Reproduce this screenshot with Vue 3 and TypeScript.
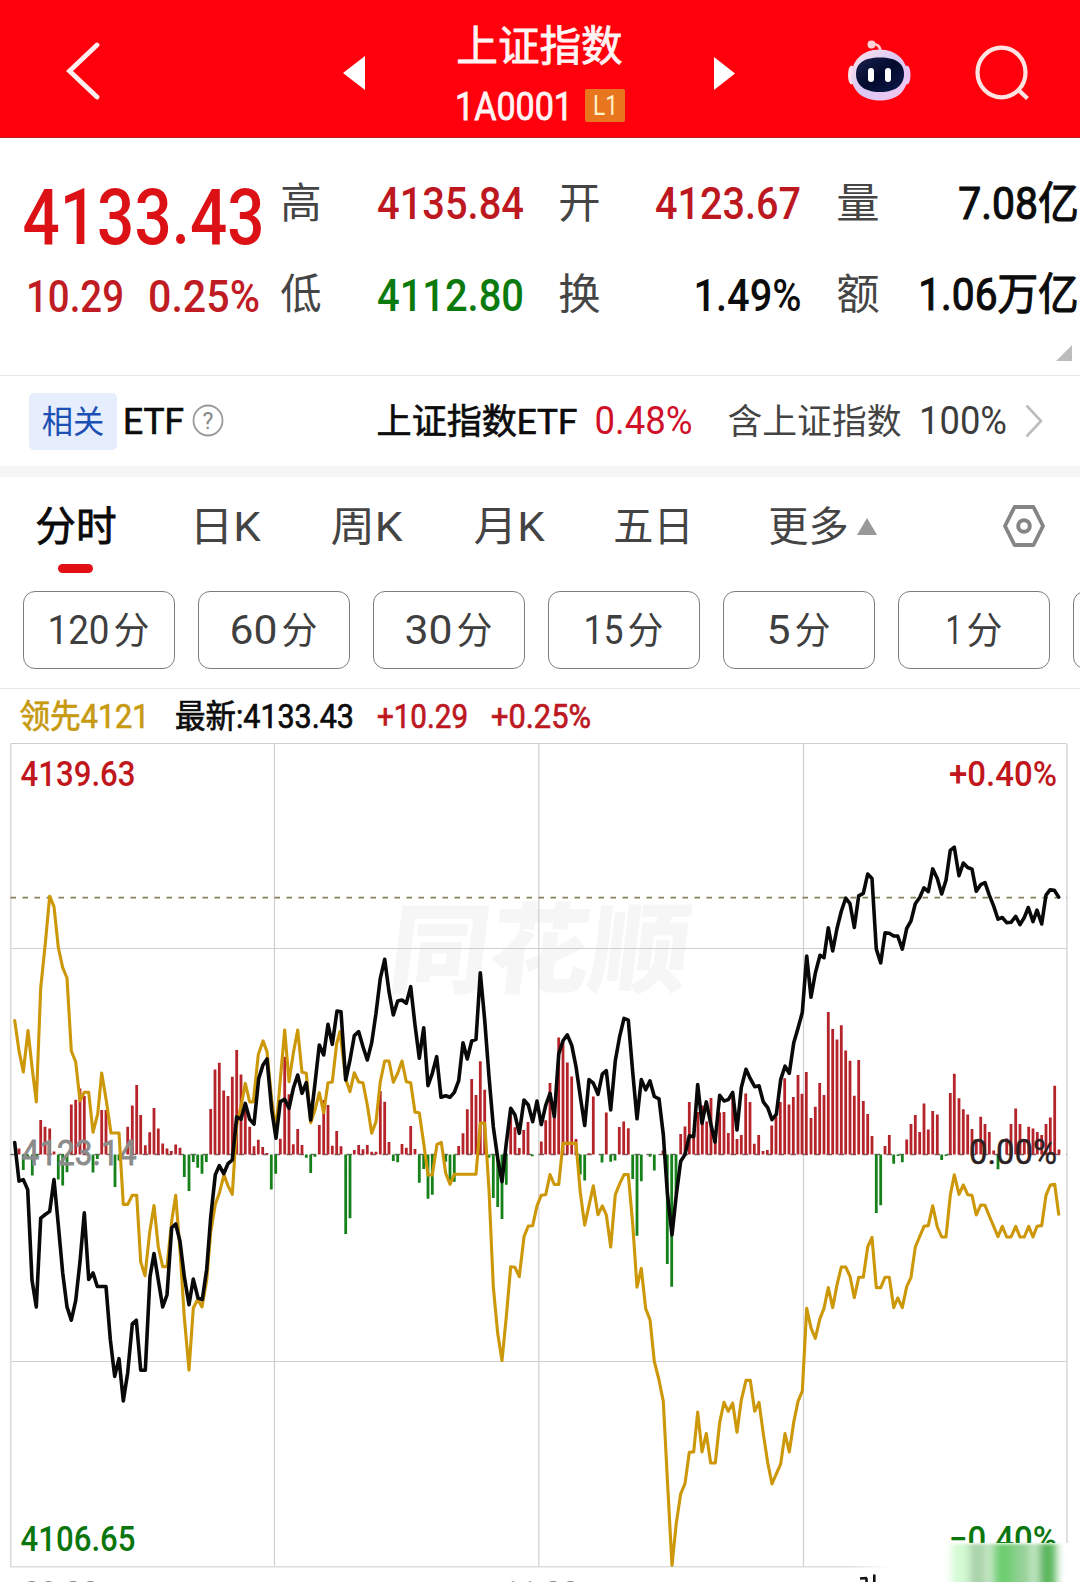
<script setup lang="ts">
import { h } from 'vue'

interface FitProps {
  t: string
  w: number
  s: number
  pad?: number
}

// A single line of text set to an exact width; s is the font size.
const Fit = (p: FitProps) => {
  const pad = p.pad ?? p.s * 0.04
  return h('svg', { class: 'fit', width: p.w, height: p.s, 'aria-label': p.t }, [
    h(
      'text',
      {
        x: -pad,
        y: p.s * 0.86,
        'font-size': p.s,
        textLength: p.w + pad * 2,
        lengthAdjust: 'spacingAndGlyphs',
        fill: 'currentColor',
      },
      p.t,
    ),
  ])
}
Fit.props = ['t', 'w', 's', 'pad']

const tabs = [
  { t: '分时', w: 78, x: 37, active: true },
  { t: '日K', w: 68, x: 191 },
  { t: '周K', w: 69, x: 332 },
  { t: '月K', w: 68, x: 475 },
  { t: '五日', w: 77, x: 615 },
  { t: '更多', w: 77, x: 770 },
].map((tab, i, all) => ({
  ...tab,
  gap: i === 0 ? tab.x : tab.x - all[i - 1].x - all[i - 1].w,
}))

const periods = [
  { n: '120', w: 57 },
  { n: '60', w: 43 },
  { n: '30', w: 43 },
  { n: '15', w: 35 },
  { n: '5', w: 19 },
  { n: '1', w: 12 },
]

// Each stretch of the session has its own origin and scale.
type Frame = [number, number, number]
const frames: Frame[] = [
  [0, 840, 2.703],
  [260, 880, 3],
  [530, 880, 2.24],
  [790, 820, 2.904],
]
type Pt = [number, number]
const parse = (parts: string[]): Pt[] =>
  parts.flatMap((part, i) => {
    const [x0, y0, sy] = frames[i]
    return part
      .trim()
      .split(/\s+/)
      .map((pair): Pt => {
        const [x, y] = pair.split(',').map(Number)
        return [+(x0 + x / 3).toFixed(1), +(y0 + y / sy).toFixed(1)]
      })
  })

const price = parse([
  '44,818 57,922 70,918 83,945 96,1190 109,1262 122,1022 135,1013 149,1004 162,918 175,1040 188,1170 201,1262 214,1298 227,1245 240,1140 253,1008 266,1188 279,1170 292,1207 318,1207 331,1350 344,1450 357,1402 370,1516 383,1440 397,1308 409,1298 422,1433 436,1433 450,1180 462,1118 475,1190 488,1262 501,1230 515,1048 527,1038 540,1085 553,1180 567,1256 580,1187 594,1238 607,1242 620,1160 632,1020 646,905 658,880 671,902 684,875 697,865 710,748 723,755 736,712 749,755 762,768 776,645 789,608 801,592',
  '35,690 48,775 61,665 74,658 87,685 100,625 113,585 126,640 139,608 152,720 165,610 178,495 191,525 204,433 217,493 231,393 243,395 257,600 270,540 283,467 296,455 309,500 322,540 335,488 348,400 361,295 374,238 387,335 400,405 413,363 426,360 439,370 452,320 465,435 478,535 491,443 504,617 517,580 530,530 543,652 557,647 570,652 583,637 596,602 609,488 622,537 635,483 648,478 661,278 674,420 687,590 700,740 713,835 726,905 739,790 752,685 765,705 778,760 792,660 805,675 818,725',
  '21,495 34,548 47,505 60,478 73,530 86,390 99,360 112,347 125,370 138,418 151,485 164,550 177,447 190,455 204,480 217,435 229,427 242,515 256,405 269,350 282,310 295,314 308,430 321,535 334,447 347,470 360,450 373,485 387,490 400,570 412,700 426,795 439,705 452,630 465,615 478,573 491,575 503,458 516,545 529,497 542,545 555,587 569,482 582,495 595,492 608,476 621,560 634,465 648,424 661,445 674,463 687,461 700,497 713,510 726,537 739,525 752,447 765,417 778,433 791,365 804,332 817,297',
  '50,395 63,515 76,445 90,393 102,400 115,313 128,380 141,315 154,265 167,227 180,243 193,312 206,220 220,213 233,157 246,170 259,375 272,415 285,328 298,329 311,337 323,337 337,375 350,315 363,293 376,243 389,225 402,197 415,208 428,142 442,170 455,215 468,175 481,88 493,79 507,162 520,125 533,138 546,143 559,207 572,188 585,182 598,218 611,250 624,288 637,283 650,298 663,297 677,280 690,304 703,283 715,254 729,295 741,262 755,302 768,218 780,203 793,204 806,224',
])

const lead = parse([
  '44,488 57,570 70,627 84,515 97,620 109,708 122,400 136,280 149,152 162,180 175,290 188,345 201,373 214,570 227,600 240,705 253,682 266,682 279,790 293,740 305,630 319,705 333,792 357,792 370,985 383,985 397,960 410,960 422,1140 435,1178 449,1060 462,988 475,1100 488,1153 501,1153 515,1030 527,960 541,1120 553,1290 567,1433 580,1265 593,1242 606,1262 620,1190 632,1060 646,985 658,955 672,905 684,935 697,958 710,770 723,720 736,658 749,708 760,708 775,580 789,543 801,572',
  '35,660 48,750 61,600 74,450 87,605 100,520 113,450 126,577 139,580 152,728 165,690 178,638 191,698 204,608 217,606 230,490 240,455 257,598 270,635 283,578 296,606 309,608 322,675 335,760 348,725 361,605 374,543 387,543 400,607 413,580 426,543 439,605 452,608 465,697 478,698 491,790 504,885 517,885 531,793 544,787 557,880 570,913 583,883 648,883 661,730 674,730 687,930 700,1220 713,1360 726,1442 739,1310 752,1160 765,1162 778,1190 792,1070 805,1038 818,1037',
  '21,730 34,706 47,705 60,660 73,682 86,682 99,590 138,590 151,700 164,773 190,685 204,750 217,730 229,750 242,822 256,705 269,680 282,660 295,660 308,770 321,912 334,870 347,960 360,985 373,1078 387,1120 400,1168 412,1340 426,1535 439,1440 452,1375 465,1352 478,1282 491,1281 503,1192 516,1281 529,1240 542,1306 556,1306 569,1215 582,1170 595,1190 608,1172 621,1237 634,1165 648,1121 661,1121 674,1190 687,1170 700,1240 713,1305 726,1353 739,1330 752,1308 765,1240 778,1281 791,1215 804,1168 817,1145',
  '50,1418 63,1475 76,1505 90,1447 102,1418 115,1358 128,1416 141,1350 154,1298 167,1298 180,1325 193,1387 206,1328 220,1328 233,1240 246,1212 259,1358 272,1358 285,1328 298,1328 311,1416 323,1388 337,1416 350,1355 363,1328 376,1240 402,1180 415,1178 428,1120 442,1182 455,1211 468,1211 481,1090 493,1030 507,1087 520,1060 533,1088 546,1090 559,1147 572,1118 585,1119 598,1150 624,1210 637,1180 650,1211 663,1211 677,1180 690,1211 703,1211 716,1180 729,1211 741,1180 755,1178 768,1090 781,1060 794,1058 806,1145',
])

const bars = parse([
  '57,834 70,892 83,858 97,907 110,858 122,757 135,775 149,780 162,842 175,918 188,934 201,898 214,715 227,702 240,672 253,692 279,899 292,862 305,730 318,730 345,938 357,866 383,775 397,718 410,662 422,743 436,825 449,790 462,724 475,780 488,820 501,834 514,841 527,823 540,832 553,911 567,949 580,870 593,886 606,902 619,870 632,727 645,620 658,602 671,677 684,692 697,640 710,568 723,634 736,715 749,775 762,828 775,810 788,830 801,846 814,945 827,902',
  '61,776 74,530 87,643 100,793 113,747 126,795 139,833 152,879 165,830 178,735 191,660 204,675 217,797 230,753 243,799 257,1062 270,1015 283,810 296,795 309,808 322,795 335,815 348,815 361,633 374,665 387,786 400,843 413,847 426,792 439,803 452,738 465,807 478,908 491,867 504,956 517,944 557,845 570,907 583,905 596,798 609,760 622,688 635,597 648,645 661,544 674,629 687,833 700,954 713,981 726,1017 739,914 752,705 765,742 778,804 791,750 804,726 817,829',
  '34,586 47,538 60,455 73,530 86,353 99,362 112,409 125,440 138,580 151,660 164,673 177,612 190,485 216,633 229,521 242,631 255,628 268,553 281,541 295,556 308,670 321,797 334,675 360,620 373,651 399,606 412,860 425,911 438,702 452,569 465,552 478,497 491,570 504,520 517,505 530,541 543,488 556,580 569,521 582,520 595,567 608,485 621,580 634,571 647,478 660,497 673,591 686,571 699,607 712,605 725,550 738,530 751,497 764,444 777,503 790,486 804,437 816,479 829,430',
  '63,865 76,833 89,764 102,799 115,558 128,607 141,637 154,596 167,669 180,699 193,801 206,697 220,816 233,854 246,918 259,1141 272,1119 285,947 298,915 311,998 324,976 337,994 350,928 363,883 376,857 389,906 402,823 415,899 428,845 442,855 455,987 468,976 481,793 493,737 507,808 520,840 533,855 546,897 559,930 572,862 585,883 598,906 611,960 624,1014 650,925 663,883 677,838 690,883 703,930 716,891 729,896 742,906 755,915 768,883 781,864 794,772 807,957',
])

const base = 1154.6
const barPath = (up: boolean) =>
  bars
    .filter(([, y]) => y < base === up)
    .map(([x, y]) => `M${x} ${base}V${y}`)
    .join('')
const upBars = barPath(true)
const downBars = barPath(false)
const toPoints = (pts: Pt[]) => pts.map((p) => p.join(',')).join(' ')
</script>

<template>
  <main class="page">
    <header class="top">
      <svg class="back" width="36" height="137" viewBox="64 0 36 137">
        <path d="M97 45 69.500 71 97 97" fill="none" stroke="#fff0f0" stroke-width="4.800" stroke-linecap="round" />
      </svg>
      <svg class="prev" width="23" height="137" viewBox="342 0 23 137"><path d="M343 73 365 56V90Z" fill="#fff" /></svg>
      <div class="title">
        <Fit class="name" t="上证指数" :w="163" :s="42" />
        <div class="code">
          <Fit class="sym" t="1A0001" :w="112" :s="38" :pad="3" />
          <span class="level"><Fit t="L1" :w="21" :s="27" :pad="2" /></span>
        </div>
      </div>
      <svg class="next" width="22" height="137" viewBox="713 0 22 137"><path d="M714 57 735 73.500 714 90Z" fill="#fff" /></svg>
      <svg class="robot" width="64" height="137" viewBox="847 0 64 137">
        <defs>
          <linearGradient id="shell" x1="0" y1="0" x2="1" y2="1">
            <stop offset="0" stop-color="#ffe3ea" />
            <stop offset=".5" stop-color="#d9c9f5" />
            <stop offset="1" stop-color="#f5c6ef" />
          </linearGradient>
          <linearGradient id="visor" x1="0" y1="0" x2="1" y2="1">
            <stop offset="0" stop-color="#1b2350" />
            <stop offset=".5" stop-color="#030a2c" />
            <stop offset="1" stop-color="#0d1b4c" />
          </linearGradient>
        </defs>
        <path d="M871 44.500c6-1 9 1 9.500 7" fill="none" stroke="#ffc9cd" stroke-width="2.600" />
        <circle cx="871.500" cy="44.500" r="4" fill="#ffd2d6" />
        <ellipse cx="851.500" cy="75" rx="3.500" ry="9.500" fill="#ffe0ea" />
        <ellipse cx="907" cy="75" rx="3.500" ry="9.500" fill="#e7c5f4" />
        <path d="M879.500 49.500C897 49.500 907.500 61 907.500 76S897 100.500 880 100.500 851.500 91 851.500 76 862 49.500 879.500 49.500Z" fill="url(#shell)" />
        <path d="M880 57.500C897 57.500 904 64 904 74S897 92 880 92 856 84 856 74 863 57.500 880 57.500Z" fill="url(#visor)" />
        <rect x="868" y="68" width="6" height="14" rx="3" fill="#fff" />
        <rect x="885" y="68" width="6" height="14" rx="3" fill="#fff" />
      </svg>
      <svg class="search" width="58" height="137" viewBox="973 0 58 137">
        <g fill="none" stroke="#ffe3e3" stroke-width="4.200">
          <ellipse cx="1001.500" cy="72.500" rx="24" ry="24.800" />
          <path d="M1018 89.500l9.500 9" />
        </g>
      </svg>
    </header>

    <section class="quote">
      <div class="last">
        <Fit class="big" t="4133.43" :w="239" :s="78" :pad="1.500" />
        <div class="delta">
          <Fit t="10.29" :w="94" :s="45" :pad="2" />
          <Fit t="0.25%" :w="108" :s="45" :pad="2" />
        </div>
      </div>
      <div class="stats">
        <Fit class="label" t="高" :w="38" :s="42" />
        <Fit class="val red" t="4135.84" :w="145" :s="45" :pad="1" />
        <Fit class="label" t="开" :w="39" :s="42" />
        <Fit class="val red" t="4123.67" :w="144" :s="45" :pad="1" />
        <Fit class="label" t="量" :w="40" :s="42" />
        <Fit class="val semi" t="7.08亿" :w="117" :s="44" />
        <Fit class="label" t="低" :w="38" :s="42" />
        <Fit class="val green" t="4112.80" :w="145" :s="45" :pad="1" />
        <Fit class="label" t="换" :w="39" :s="42" />
        <Fit class="val" t="1.49%" :w="105" :s="45" :pad="1.500" />
        <Fit class="label" t="额" :w="40" :s="42" />
        <Fit class="val semi" t="1.06万亿" :w="157" :s="44" />
      </div>
      <i class="corner"></i>
    </section>

    <section class="related">
      <span class="badge"><Fit t="相关" :w="60" :s="32" /></span>
      <Fit class="etf semi" t="ETF" :w="57" :s="36" :pad="2" />
      <svg class="help" width="32" height="34" viewBox="0 0 32 34">
        <ellipse cx="16" cy="16.500" rx="14.500" ry="15" fill="none" stroke="#999" stroke-width="1.800" />
        <text x="16" y="24.500" font-size="23" text-anchor="middle" fill="#888">?</text>
      </svg>
      <Fit class="fund semi" t="上证指数ETF" :w="198" :s="35" />
      <Fit class="pct" t="0.48%" :w="95" :s="38" :pad="1.500" />
      <Fit class="holds" t="含上证指数" :w="171" :s="35" />
      <Fit class="share" t="100%" :w="84" :s="38" :pad="2" />
      <svg class="go" width="18" height="34" viewBox="0 0 18 34"><path d="M1.500 1.500 16 17 1.500 32.500" fill="none" stroke="#bdbdbd" stroke-width="2.600" /></svg>
    </section>

    <nav class="tabs">
      <span v-for="tab in tabs" :key="tab.t" class="tab" :class="{ active: tab.active }" :style="{ marginLeft: tab.gap + 'px' }">
        <Fit :t="tab.t" :w="tab.w" :s="41" />
      </span>
      <svg class="caret" width="20" height="17" viewBox="0 0 20 17"><path d="M10 0 20 17H0Z" fill="#999" /></svg>
      <svg class="gear" width="44" height="44" viewBox="0 0 44 44">
        <g fill="none" stroke="#858585" stroke-width="4" stroke-linejoin="round">
          <path d="M12.500 3H31.500L41 22 31.500 41H12.500L3 22Z" stroke-width="3.800" />
          <circle cx="22" cy="22" r="5.800" />
        </g>
      </svg>
    </nav>

    <div class="periods">
      <button v-for="p in periods" :key="p.n" class="chip" type="button">
        <Fit class="num" :t="p.n" :w="p.w" :s="40" :pad="2.500" />
        <Fit t="分" :w="33" :s="37" />
      </button>
      <button class="chip" type="button" aria-label="more"></button>
    </div>

    <div class="info">
      <Fit class="gold" t="领先4121" :w="127" :s="33" :pad="1.500" />
      <Fit class="now" t="最新:4133.43" :w="177" :s="33" :pad="1" />
      <Fit class="red d1" t="+10.29" :w="89" :s="33" :pad="1" />
      <Fit class="red d2" t="+0.25%" :w="98" :s="33" :pad="1" />
    </div>

    <svg class="chart" width="1080" height="842" viewBox="0 740 1080 842">
      <defs>
        <clipPath id="cut"><rect x="930" y="1500" width="150" height="43" /></clipPath>
        <filter id="soft" x="-10%" y="-20%" width="120%" height="150%"><feGaussianBlur stdDeviation="4.500 1.500" /></filter>
        <linearGradient id="edge"><stop offset="0" stop-color="#dcdcdc" /><stop offset=".95" stop-color="#dcdcdc" /><stop offset="1" stop-color="#dcdcdc" stop-opacity="0" /></linearGradient>
      </defs>
      <text class="mark" transform="translate(386 985) skewX(-7)" x="0" y="0" font-size="98" textLength="300" lengthAdjust="spacingAndGlyphs">同花顺</text>
      <g fill="none" stroke="#cfcfcf" stroke-width="1.200">
        <path d="M10.700 743.500H1067M10.700 948.500H1067M10.700 1361.500H1067M274.500 743.500V1567M538.800 743.500V1567M803.500 743.500V1567" />
        <path d="M10.700 743.500V1567M1067 743.500V1543" stroke="#dedede" stroke-width="1.800" />
      </g>
      <rect x="10" y="1566" width="880" height="1.500" fill="url(#edge)" />
      <path d="M10.500 897.600H1067" stroke="#858158" stroke-width="1.800" stroke-dasharray="5.500 6.500" />
      <path d="M10.500 1154.600H1067" stroke="#77666a" stroke-width="1.500" stroke-dasharray="5.500 6.500" />
      <g fill="none" stroke-width="2.800">
        <path :d="upBars" stroke="#b5242a" />
        <path :d="downBars" stroke="#16801a" />
      </g>
      <text x="21.500" y="1164.500" font-size="35" textLength="115" lengthAdjust="spacingAndGlyphs" fill="#8b8b8b" stroke="#8b8b8b" stroke-width=".8">4123.14</text>
      <polyline :points="toPoints(lead)" fill="none" stroke="#cc9708" stroke-width="3.100" stroke-linejoin="round" stroke-linecap="round" />
      <polyline :points="toPoints(price)" fill="none" stroke="#090909" stroke-width="3.600" stroke-linejoin="round" stroke-linecap="round" />
      <text x="969" y="1164" font-size="35" textLength="88" lengthAdjust="spacingAndGlyphs" fill="#2b2022" stroke="#2b2022" stroke-width=".4">0.00%</text>
      <g font-size="35" class="bounds">
        <text x="20.500" y="785.500" textLength="115" lengthAdjust="spacingAndGlyphs" fill="#c0161c">4139.63</text>
        <text x="949" y="785.500" textLength="108" lengthAdjust="spacingAndGlyphs" fill="#c0161c">+0.40%</text>
        <text x="20.500" y="1551" textLength="115" lengthAdjust="spacingAndGlyphs" fill="#0a760c">4106.65</text>
        <text x="949" y="1551" textLength="108" lengthAdjust="spacingAndGlyphs" fill="#0a760c" clip-path="url(#cut)">−0.40%</text>
      </g>
      <g filter="url(#soft)">
        <rect x="952" y="1544" width="16" height="46" fill="#d3fbd3" />
        <rect x="969" y="1544" width="17" height="46" fill="#a8d3a9" />
        <rect x="986" y="1544" width="8" height="46" fill="#d3efd3" />
        <rect x="993" y="1544" width="23" height="46" fill="#6fce72" />
        <rect x="1014" y="1544" width="16" height="46" fill="#93d095" />
        <rect x="1030" y="1544" width="9" height="46" fill="#c9eac9" />
        <rect x="1039" y="1544" width="17" height="46" fill="#57b55a" />
      </g>
      <g font-size="34" fill="#8a8a8a">
        <text x="23" y="1604.500" textLength="76" lengthAdjust="spacingAndGlyphs">09:30</text>
        <text x="503" y="1604.500" textLength="76" lengthAdjust="spacingAndGlyphs">11:30</text>
      </g>
      <path d="M860 1578.500l7-.5M866.500 1578v4M874.300 1574.500V1582" stroke="#111" stroke-width="2.600" fill="none" />
    </svg>
  </main>
</template>

<style>
body {
  margin: 0;
  background: #fff;
  overflow: hidden;
}
</style>

<style scoped>
.page {
  width: 1080px;
  height: 1582px;
  overflow: hidden;
  background: #fff;
  font-family: Roboto, "Noto Sans CJK SC", sans-serif;
  color: #0c0c0c;
}
svg {
  display: block;
  flex: none;
}
.fit {
  overflow: visible;
}
.semi {
  stroke: currentColor;
  stroke-width: 0.7px;
}
.top {
  display: flex;
  height: 138px;
  box-sizing: border-box;
  background: #ff000c;
  border-bottom: 1px solid #c01a24;
  padding-left: 64px;
}
.prev { margin-left: 242px; }
.title {
  width: 167px;
  margin-left: 93px;
  color: #fff4f4;
  stroke: #fff4f4;
  stroke-width: 0.8px;
}
.name { margin-top: 25px; }
.code {
  display: flex;
  align-items: center;
  justify-content: space-between;
  height: 33px;
  margin-top: 22px;
}
.level {
  display: flex;
  align-items: center;
  justify-content: center;
  width: 40px;
  height: 33px;
  border-radius: 2px;
  background: #e8761e;
  color: #fff0c8;
  stroke: none;
}
.next { margin-left: 88px; }
.robot { margin-left: 112px; }
.search { margin-left: 62px; }
.quote {
  display: flex;
  position: relative;
  height: 238px;
  box-sizing: border-box;
  border-bottom: 1px solid #e6e6e6;
}
.last {
  width: 259px;
  padding: 39px 0 0 24px;
  box-sizing: border-box;
  font-weight: 500;
}
.big { color: #dc1116; }
.delta {
  display: flex;
  justify-content: space-between;
  margin: 18px 1px 0 4px;
  color: #c01c24;
}
.stats {
  display: grid;
  grid-template-columns: 40px 201px 76px 201px 78px 199px;
  grid-template-rows: 45px 45px;
  row-gap: 46.500px;
  align-items: center;
  align-content: start;
  margin: 42px 0 0 23px;
}
.label { color: #454545; }
.label:nth-child(6n + 3) { margin-left: 37px; }
.label:nth-child(6n + 5) { margin-left: 38px; }
.val {
  justify-self: end;
  font-weight: 500;
}
.val.semi {
  font-weight: 400;
  stroke-width: 1.1px;
}
.red { color: #bd181f; }
.green { color: #0a7a0c; }
.corner {
  position: absolute;
  right: 8px;
  bottom: 14px;
  width: 16px;
  height: 16px;
  background: #bcbcbc;
  clip-path: polygon(100% 0, 100% 100%, 0 100%);
}
.related {
  display: flex;
  align-items: center;
  height: 90px;
  padding-left: 29px;
  border-bottom: 11px solid #f6f6f6;
}
.badge {
  display: flex;
  align-items: center;
  justify-content: center;
  width: 88px;
  height: 57px;
  border-radius: 5px;
  background: #e6edfc;
  color: #1c50b4;
}
.etf { margin-left: 8px; }
.help { margin-left: 10px; }
.fund { margin-left: 154px; }
.pct { margin-left: 20px; margin-bottom: 3px; color: #cf1028; }
.holds { margin-left: 38px; color: #444; }
.share { margin-left: 21px; margin-bottom: 3px; color: #3c3c3c; }
.go { margin-left: 20px; }
.tabs {
  display: flex;
  align-items: center;
  height: 98px;
  color: #444;
}
.tab {
  position: relative;
}
.tab.active {
  color: #0a0a0a;
  stroke: #0a0a0a;
  stroke-width: 0.8px;
}
.tab.active::after {
  content: "";
  position: absolute;
  left: 21px;
  top: 58px;
  width: 35px;
  height: 9px;
  border-radius: 5px;
  background: #e20f15;
}
.caret { margin-left: 10px; }
.gear { margin-left: 125px; }
.periods {
  display: flex;
  gap: 23px;
  height: 114px;
  padding: 16px 0 0 23px;
  box-sizing: border-box;
  border-bottom: 1px solid #e6e6e6;
  overflow: hidden;
}
.chip {
  display: flex;
  flex: none;
  align-items: center;
  justify-content: center;
  gap: 8px;
  width: 152px;
  height: 78px;
  padding: 0;
  border: 1px solid #7d7d7d;
  border-radius: 12px;
  background: #fff;
  font: inherit;
  color: #3f3f3f;
}
.info {
  display: flex;
  align-items: center;
  height: 51px;
  padding: 3px 0 0 21px;
  box-sizing: border-box;
  stroke: currentColor;
  stroke-width: 0.7px;
}
.info .fit { stroke: currentColor; }
.gold { color: #c79a12; }
.now { margin-left: 28px; }
.d1 { margin-left: 25px; }
.d2 { margin-left: 25px; }
.chart { overflow: hidden; }
.bounds { font-weight: 500; }
.mark {
  font-family: "Noto Sans CJK SC", sans-serif;
  font-weight: 900;
  fill: #f6f6f6;
}
</style>
